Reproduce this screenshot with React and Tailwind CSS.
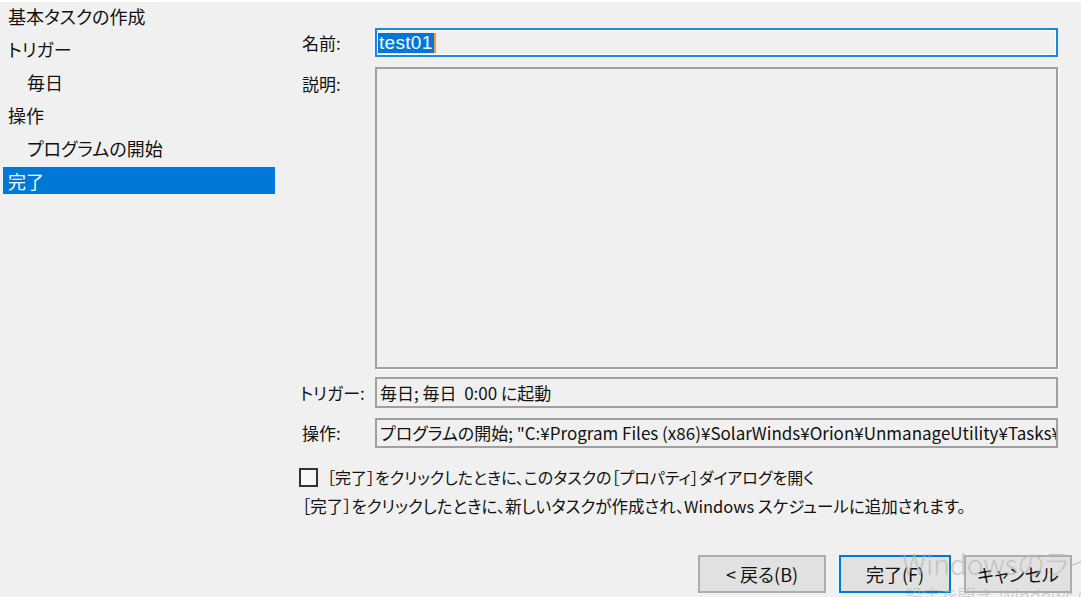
import React from 'react';

const font = "font-['Noto_Sans_CJK_JP','Noto_Sans',sans-serif] [font-feature-settings:'palt']";

export default function App() {
    const steps = [
        { label: "基本タスクの作成", indent: false },
        { label: "トリガー", indent: false },
        { label: "毎日", indent: true },
        { label: "操作", indent: false },
        { label: "プログラムの開始", indent: true },
        { label: "完了", indent: false, active: true }
    ];

    return (
        <div className={`relative w-[1081px] h-[597px] overflow-hidden bg-[#f0f0f0] text-[#111111] ${font}`}>
            <div className="h-[2px] bg-white" />
            <div className="flex">
                {/* left step list */}
                <div className="w-[300px] shrink-0 flex flex-col gap-[6px] pl-[3px]">
                    {steps.map((step, index) => (
                        <div
                            key={index}
                            className={`h-[27px] w-[272px] flex items-center text-[18px] leading-none ${step.active ? 'bg-[#0078d7] text-white' : ''} ${step.indent ? 'pl-[24px]' : 'pl-[5px]'}`}
                        >
                            {step.label}
                        </div>
                    ))}
                </div>

                {/* right form */}
                <div className="flex-1 min-w-0 flex flex-col pt-[26px] pr-[23px]">
                    <div className="flex items-center h-[29px]">
                        <div className="w-[75px] shrink-0 pl-[2px] text-[17px]">名前:</div>
                        <div className="flex-1 min-w-0 h-full border-2 border-[#1c86e0] shadow-[inset_0_0_0_1px_#ffffff] flex items-center pl-[1px]">
                            <span className="bg-[#0078d7] text-white text-[19px] leading-[20px] h-[20px] px-[1px] font-['Liberation_Sans',sans-serif] tracking-[0.3px]">test01</span>
                            <span className="w-[2px] h-[20px] bg-[#f39a3a]" />
                        </div>
                    </div>

                    <div className="flex items-start mt-[10px]">
                        <div className="w-[75px] shrink-0 pl-[2px] mt-[7px] text-[17px] leading-[20px]">説明:</div>
                        <div className="flex-1 min-w-0 h-[302px] border-2 border-[#a0a0a0] shadow-[1px_1px_0_0_#ffffff]" />
                    </div>

                    <div className="flex items-center h-[31px] mt-[8px]">
                        <div className="w-[75px] shrink-0 text-[17px]">トリガー:</div>
                        <div className="flex-1 min-w-0 h-full border-2 border-[#a0a0a0] flex items-center px-[3px] text-[17px] whitespace-nowrap overflow-hidden">
                            毎日; 毎日&nbsp;&nbsp;0:00 に起動
                        </div>
                    </div>

                    <div className="flex items-center h-[30px] mt-[10px]">
                        <div className="w-[75px] shrink-0 pl-[2px] text-[17px]">操作:</div>
                        <div className="flex-1 min-w-0 h-full border-2 border-[#a0a0a0] flex items-center px-[3px] text-[17px] whitespace-nowrap overflow-hidden">
                            プログラムの開始; "C:¥Program Files (x86)¥SolarWinds¥Orion¥UnmanageUtility¥Tasks¥UnmanageTask.exe"
                        </div>
                    </div>

                    <div className="flex items-center h-[20px] mt-[19px]">
                        <div className="w-[19px] h-[19px] shrink-0 border-2 border-[#333333] bg-[#f7f7f7] ml-[-1px]" />
                        <div className="ml-[9px] text-[16px] whitespace-nowrap">［完了］をクリックしたときに、このタスクの［プロパティ］ダイアログを開く</div>
                    </div>

                    <div className="h-[20px] mt-[9px] pl-[2px] flex items-center text-[16.5px] whitespace-nowrap">
                        ［完了］をクリックしたときに、新しいタスクが作成され、Windows スケジュールに追加されます。
                    </div>

                    <div className="flex justify-end mr-[-14px] mt-[39px] text-[18px]">
                        <button className="w-[128px] h-[38px] bg-[#e1e1e1] border-2 border-[#adadad] flex items-center justify-center">&lt; 戻る(B)</button>
                        <button className="w-[112px] h-[38px] ml-[13px] bg-[#e1e1e1] border-2 border-[#0078d7] flex items-center justify-center">完了(F)</button>
                        <button className="w-[108px] h-[38px] ml-[13px] bg-[#e1e1e1] border-2 border-[#adadad] flex items-center justify-center">キャンセル</button>
                    </div>
                </div>
            </div>

            {/* activation watermark */}
            <div className="absolute left-[902px] top-[549px] whitespace-nowrap text-[28px] leading-none font-light text-[#b4b4b4]/70 pointer-events-none">
                Windowsのライセンス認証
            </div>
            <div className="absolute left-[905px] top-[586px] whitespace-nowrap text-[18px] leading-none font-light text-[#b4b4b4]/70 pointer-events-none">
                設定を開き、Windows のライセンス認証を行ってください。
            </div>
        </div>
    );
}
